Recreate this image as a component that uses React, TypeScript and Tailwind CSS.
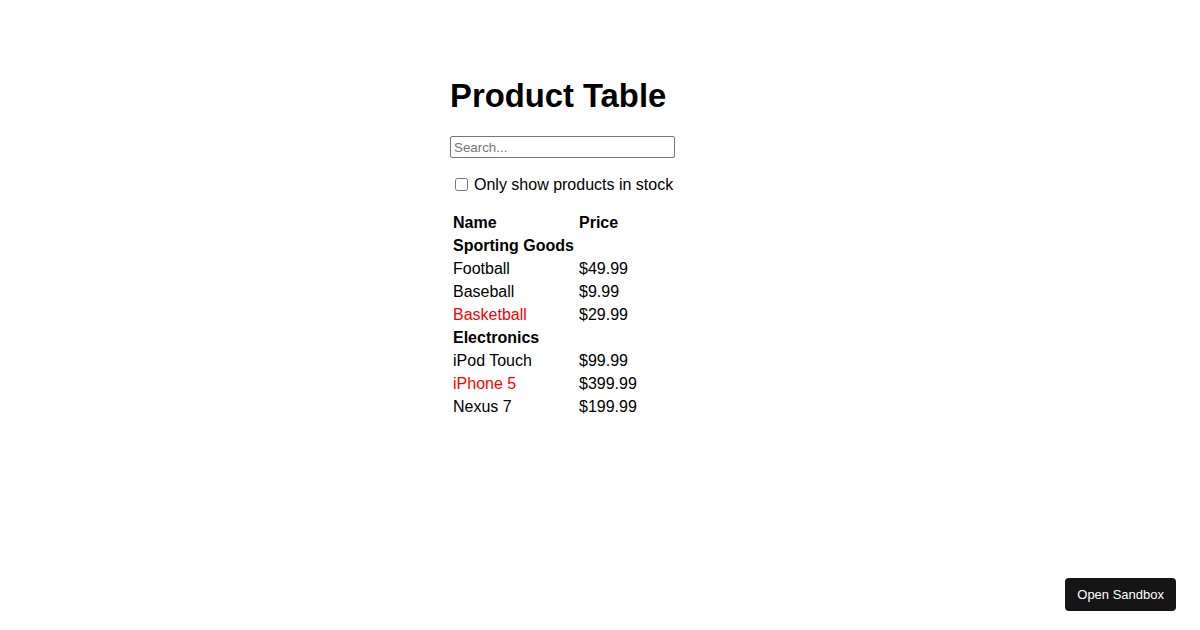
import React, { useState } from "react";

type Product = { category: string; price: string; stocked: boolean; name: string };

const PRODUCTS: Product[] = [
  { category: "Sporting Goods", price: "$49.99", stocked: true, name: "Football" },
  { category: "Sporting Goods", price: "$9.99", stocked: true, name: "Baseball" },
  { category: "Sporting Goods", price: "$29.99", stocked: false, name: "Basketball" },
  { category: "Electronics", price: "$99.99", stocked: true, name: "iPod Touch" },
  { category: "Electronics", price: "$399.99", stocked: false, name: "iPhone 5" },
  { category: "Electronics", price: "$199.99", stocked: true, name: "Nexus 7" },
];

const cell = "p-[1px] text-left align-middle";

const ProductTable: React.FC<{ products: Product[]; filterText: string; inStockOnly: boolean }> = ({ products, filterText, inStockOnly }) => {
  const rows: React.ReactNode[] = [];
  let lastCategory: string | null = null;

  products.forEach(product => {
    if (product.name.toLowerCase().indexOf(filterText.toLowerCase()) === -1) return;
    if (inStockOnly && !product.stocked) return;
    if (product.category !== lastCategory) {
      rows.push(
        <tr key={product.category}>
          <th colSpan={2} className={`${cell} font-bold`}>{product.category}</th>
        </tr>
      );
    }
    rows.push(
      <tr key={product.name}>
        <td className={`${cell} ${product.stocked ? "" : "text-[#ff0000]"}`}>{product.name}</td>
        <td className={cell}>{product.price}</td>
      </tr>
    );
    lastCategory = product.category;
  });

  return (
    <table className="mt-[16px] border-separate border-spacing-[2px] leading-[19px] text-[16px]">
      <thead>
        <tr>
          <th className={`${cell} w-[124px] font-bold`}>Name</th>
          <th className={`${cell} font-bold`}>Price</th>
        </tr>
      </thead>
      <tbody>{rows}</tbody>
    </table>
  );
};

export default function App() {
  const [filterText, setFilterText] = useState("");
  const [inStockOnly, setInStockOnly] = useState(false);

  return (
    <div className="min-h-screen bg-white text-black font-['Liberation_Sans',Arial,sans-serif]">
      <div className="w-[300px] mx-auto pt-[77px]">
        <h1 className="text-[32.8px] font-bold leading-[37px]">Product Table</h1>
        <form className="mt-[22px]">
          <input
            type="text"
            value={filterText}
            onChange={e => setFilterText(e.target.value)}
            placeholder="Search..."
            className="block w-[225px] h-[22px] border border-[#767676] rounded-[2px] px-[3px] text-[13.33px] leading-[16px] placeholder:text-[#757575] outline-none"
          />
          <label className="mt-[17px] flex items-center text-[16px] leading-[19px]">
            <input
              type="checkbox"
              checked={inStockOnly}
              onChange={e => setInStockOnly(e.target.checked)}
              className="ml-[5px] mr-[6px] w-[13px] h-[13px]"
            />
            Only show products in stock
          </label>
        </form>
        <ProductTable products={PRODUCTS} filterText={filterText} inStockOnly={inStockOnly} />
      </div>
      <button className="fixed bottom-[19px] right-[24px] h-[33px] px-[12px] rounded-[4px] bg-[#151515] text-white text-[13px] font-['Liberation_Sans',Arial,sans-serif]">
        Open Sandbox
      </button>
    </div>
  );
}
